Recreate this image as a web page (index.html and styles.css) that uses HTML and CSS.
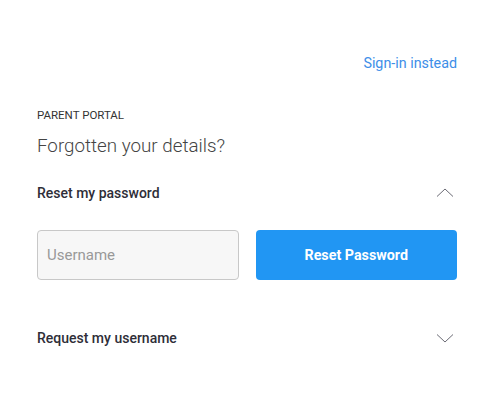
FILE: index.html
```html
<!DOCTYPE html>
<html>
<head>
<meta charset="utf-8">
<link rel="stylesheet" href="styles.css">
</head>
<body>
<div class="page">
  <div class="top"><a class="signin" href="#">Sign-in instead</a></div>
  <div class="eyebrow">PARENT PORTAL</div>
  <h1 class="title">Forgotten your details?</h1>
  <div class="acc-head first">
    <span>Reset my password</span>
    <svg class="chev" width="18" height="10" viewBox="0 0 18 10"><path d="M1 8.5 L9 1 L17 8.5" fill="none" stroke="#6b6b75" stroke-width="1"/></svg>
  </div>
  <div class="form-row">
    <input class="field" type="text" placeholder="Username">
    <button class="btn">Reset Password</button>
  </div>
  <div class="acc-head second">
    <span>Request my username</span>
    <svg class="chev" width="18" height="10" viewBox="0 0 18 10"><path d="M1 1.5 L9 9 L17 1.5" fill="none" stroke="#6b6b75" stroke-width="1"/></svg>
  </div>
</div>
</body>
</html>
```
FILE: styles.css
```css
html, body { margin: 0; padding: 0; background: #fff; }
body { font-family: Roboto, "Noto Sans", sans-serif; color: #333; }
.page { padding: 53px 37px 0 37px; }
.top { display: flex; justify-content: flex-end; line-height: 20px; }
.signin { color: #3d8ee8; font-size: 14.3px; text-decoration: none; }
.eyebrow { margin-top: 34px; font-size: 11.5px; line-height: 16px; color: #333; }
.title { margin: 11px 0 0 0; font-size: 18.8px; font-weight: 300; line-height: 24px; color: #444; }
.acc-head { display: flex; justify-content: space-between; align-items: center; height: 30px; font-size: 14px; font-weight: 500; color: #2e2e38; }
.acc-head .chev { margin-right: 3px; }
.first { margin-top: 20px; }
.second { margin-top: 43px; }
.form-row { margin-top: 22px; display: grid; grid-template-columns: 1fr 1fr; column-gap: 17px; }
.field { width: 100%; min-width: 0; box-sizing: border-box; height: 50px; border: 1px solid #c8c8c8; border-radius: 4px; background: #f7f7f7; padding: 0 9px; font-family: Roboto, sans-serif; font-size: 15px; color: #333; outline: none; }
.field::placeholder { color: #999; }
.btn { width: 100%; height: 50px; border: none; border-radius: 4px; background: #2196f3; color: #fff; font-family: Roboto, sans-serif; font-size: 14.3px; font-weight: 700; cursor: pointer; }
```
